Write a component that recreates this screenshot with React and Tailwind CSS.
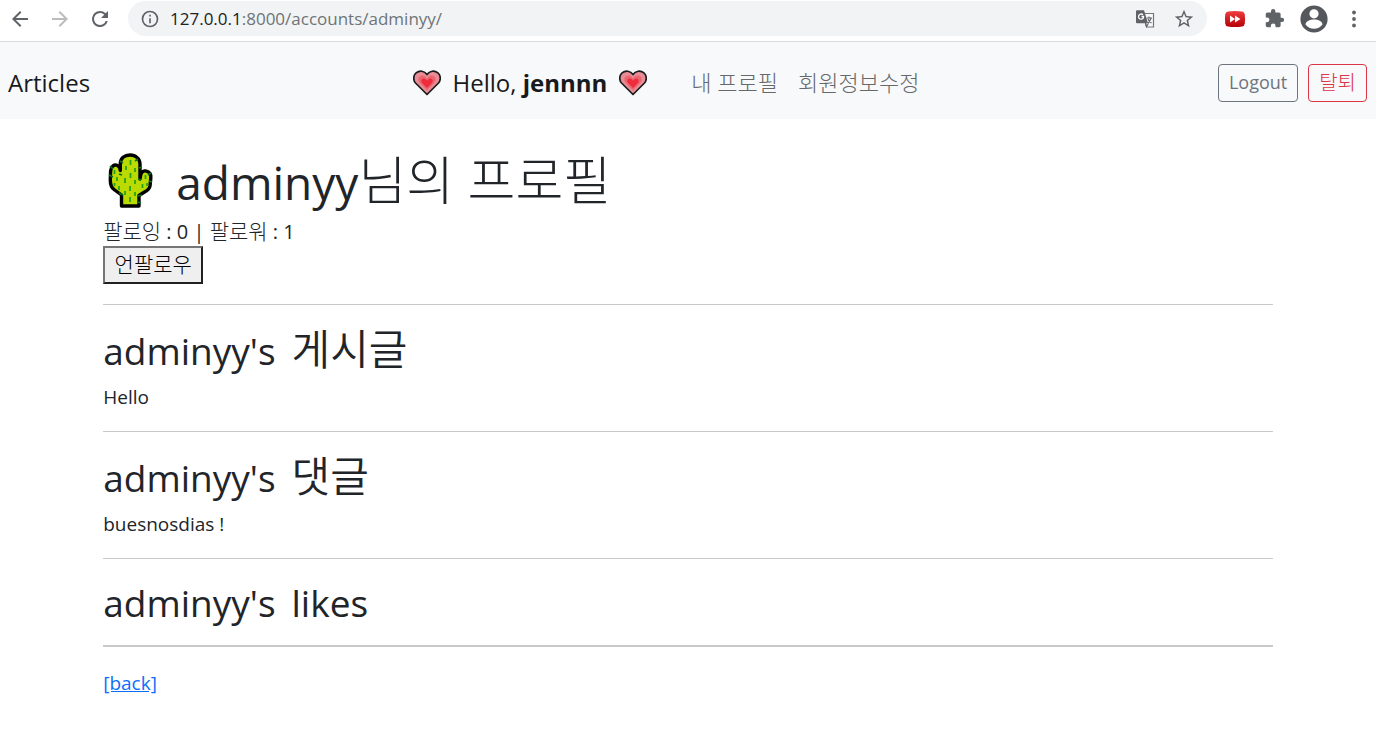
import React from 'react';

function Heart() {
  return (
    <svg viewBox="0 0 28 26" className="h-[26px] w-[28px] shrink-0" aria-hidden="true">
      <path d="M14 24.500 L2.500 13 C-.1 9.800 .2 5.300 3.100 2.900 C6.500 .1 11.500 .7 14 4.500 C16.500 .7 21.500 .1 24.900 2.900 C27.800 5.300 28.100 9.800 25.500 13 Z" fill="#ea8c95" stroke="#1c1c1e" strokeWidth="1.700" strokeLinejoin="round" />
      <path d="M14 20.500 L6.800 13 C4.300 10.200 5.300 6.500 8 5.800 C10.800 5 13 6.500 14 8.800 C15 6.500 17.200 5 20 5.800 C22.700 6.500 23.700 10.200 21.200 13 Z" fill="#ea6670" />
      <path d="M14 18 L9.300 13.200 C7.300 10.800 8.500 8.700 10.500 8.500 C12.200 8.400 13.300 9.500 14 10.800 C14.700 9.500 15.800 8.400 17.500 8.500 C19.500 8.700 20.700 10.800 18.700 13.200 Z" fill="#ee2c3c" />
    </svg>
  );
}

function Cactus() {
  return (
    <svg viewBox="0 0 46 56" className="h-[56px] w-[46px] shrink-0" aria-hidden="true">
      <path d="M13.500 53 V42 L6 36.500 C3 34.300 2.300 31 2.300 27 L2.600 18 C3 12.800 6.500 11.200 9 12.300 C11 13.200 12.300 15 12.300 17.500 V11 C12.300 5 16.500 2 22 2 C28 2 32 6 32 11 V26 L32.800 21.500 C33.500 18.500 36 17.300 38.500 18.200 C41.500 19 43.200 21.500 42.800 25 L42 33 C41.500 36 39 37.700 36.500 39 L31 42.500 V53 Z" fill="#bada00" stroke="#000" strokeWidth="3.400" strokeLinejoin="round" />
      <path d="M22.500 7v5M18 13v4M27 15v4M22.500 20v5M17 25v5M27 27v4M22 33v5M17 38v4M27 39v4M22 44v5M6.500 17v4M9 24v4M6.500 30v3M11 33v4M37.500 22v4M39 30v3M34.500 31v4" stroke="#1ea21e" strokeWidth="1.700" />
      <path d="M12 8l3 2M30 6l-3 2M34 14l-3 1M11 21l3 1M33 27l-3-1M1 22l4 2M11 40l4 2M34 42l-4 1M30 49l3 1M44 29l-3-1M2 13l3 3M43 20l-3 2" stroke="#0d6f20" strokeWidth="1.600" />
    </svg>
  );
}

const glyph = 'h-6 w-6';

function BrowserBar() {
  return (
    <header className="flex h-[42px] items-start border-b border-[#d9dbde] bg-white text-[#5f6368]">
      <div className="flex h-[37px] flex-1 items-center pl-2">
        <button aria-label="Back" className="flex w-10 justify-start">
          <svg viewBox="0 0 24 24" className={glyph} fill="currentColor"><path d="M20 11H7.830l5.590-5.590L12 4l-8 8 8 8 1.410-1.410L7.830 13H20z" /></svg>
        </button>
        <button aria-label="Forward" className="flex w-10 justify-start text-[#babcbe]">
          <svg viewBox="0 0 24 24" className={glyph} fill="currentColor"><path d="M12 4l-1.410 1.410L16.170 11H4v2h12.170l-5.580 5.590L12 20l8-8z" /></svg>
        </button>
        <button aria-label="Reload" className="flex w-10 justify-start">
          <svg viewBox="0 0 24 24" className={glyph} fill="currentColor"><path d="M17.650 6.350A7.960 7.960 0 0 0 12 4a8 8 0 1 0 7.730 10h-2.080A6 6 0 1 1 12 6c1.660 0 3.140.69 4.220 1.780L13 11h7V4z" /></svg>
        </button>
        <div className="flex h-[35px] flex-1 items-center rounded-full bg-[#f1f3f4] pl-3 pr-3">
          <svg viewBox="0 0 24 24" className="mr-[10px] h-5 w-5" fill="currentColor" aria-hidden="true"><path d="M11 7h2v2h-2zm0 4h2v6h-2zm1-9a10 10 0 1 0 0 20 10 10 0 0 0 0-20m0 18a8 8 0 1 1 0-16 8 8 0 0 1 0 16" /></svg>
          <div className="flex-1 text-[17px] leading-6 text-[#6f7377]"><span className="text-[#202124]">127.0.0.1</span>:8000/accounts/adminyy/</div>
          <button aria-label="Translate" className="mr-[18px]">
            <svg viewBox="0 0 20 20" className="h-5 w-5">
              <path d="M8 4.500h10.500v13.500H11.500z" fill="#f8f9fa" stroke="#74787c" strokeWidth="1.200" />
              <path d="M2 1.200h7l4 13H2a1 1 0 0 1-1-1v-11a1 1 0 0 1 1-1z" fill="#5f6368" />
              <path d="M9 7.500H6.500M8.700 7.500C8.500 9.300 7.400 10.200 6.100 10.200a2.600 2.600 0 1 1 1.800-4.500" fill="none" stroke="#fff" strokeWidth="1.300" />
              <path d="M11.500 9h5.500M14 7.500V9M16 9c-.5 2-1.500 3.500-3 5M13 10c.5 1.500 2 3.200 3.500 4M10.500 14.200l1 3.500 2-3.500" fill="none" stroke="#5f6368" strokeWidth="1.100" />
            </svg>
          </button>
          <button aria-label="Bookmark">
            <svg viewBox="0 0 24 24" className="h-[22px] w-[22px]" fill="currentColor"><path d="M22 9.240l-7.190-.62L12 2 9.190 8.630 2 9.240l5.460 4.730L5.820 21 12 17.270 18.180 21l-1.630-7.030zM12 15.400l-3.760 2.270 1-4.280-3.320-2.880 4.380-.38L12 6.100l1.710 4.040 4.380.38-3.320 2.880 1 4.280z" /></svg>
          </button>
        </div>
      </div>
      <div className="flex h-[37px] items-center pl-[17px] pr-[10px]">
        <button aria-label="Fast forward" className="mr-[18px]">
          <svg viewBox="0 0 22 18" className="h-[18px] w-[22px]">
            <defs><linearGradient id="red" x1="0" y1="0" x2="0" y2="1"><stop offset="0" stopColor="#ef3d40" /><stop offset="1" stopColor="#b50005" /></linearGradient></defs>
            <path d="M4 1.500Q11 .5 18 1.500Q20.500 2 20.800 4.500Q21.300 9 20.800 13.500Q20.500 16 18 16.500Q11 17.500 4 16.500Q1.500 16 1.200 13.500Q.7 9 1.200 4.500Q1.500 2 4 1.500" fill="url(#red)" />
            <path d="M6 5.500L11 9L6 12.500zM11 5.500L16.500 9L11 12.500z" fill="#fff" />
          </svg>
        </button>
        <button aria-label="Extensions" className="mr-[15px]">
          <svg viewBox="0 0 24 24" className="h-[21px] w-[21px]" fill="currentColor"><path d="M20.500 11H19V7a2 2 0 0 0-2-2h-4V3.500a2.500 2.500 0 0 0-5 0V5H4a2 2 0 0 0-2 2v3.800h1.500a2.700 2.700 0 0 1 0 5.400H2V20a2 2 0 0 0 2 2h3.800v-1.500a2.700 2.700 0 0 1 5.400 0V22H17a2 2 0 0 0 2-2v-4h1.500a2.500 2.500 0 0 0 0-5" /></svg>
        </button>
        <button aria-label="Account" className="mr-[14px]">
          <svg viewBox="0 0 28 28" className="h-7 w-7">
            <circle cx="14" cy="14" r="13.600" fill="#54585d" />
            <circle cx="14" cy="8.800" r="4.600" fill="#fff" />
            <path d="M5.500 19.500C6 12.800 22 12.800 22.500 19.500C18.500 25.200 9.500 25.200 5.500 19.500" fill="#fff" />
          </svg>
        </button>
        <button aria-label="Menu">
          <svg viewBox="0 0 24 24" className={glyph} fill="currentColor"><circle cx="12" cy="5.500" r="1.900" /><circle cx="12" cy="12" r="1.900" /><circle cx="12" cy="18.500" r="1.900" /></svg>
        </button>
      </div>
    </header>
  );
}

function Section({ owner, topic, children }) {
  return (
    <section className="border-t border-[#c8c9ca] pt-5">
      <h2 className="flex h-[50px] items-baseline gap-4 text-[37px] leading-[48px]">
        <span>{owner}'s</span> {topic}
      </h2>
      {children && <p className="mt-2 mb-5 text-[19px] leading-7">{children}</p>}
    </section>
  );
}

export default function App() {
  return (
    <div className="min-h-screen bg-white font-['Open_Sans','Noto_Sans_CJK_KR',sans-serif] text-[#212529]">
      <BrowserBar />
      <nav className="flex h-[77px] items-center justify-between bg-[#f8f9fa] pt-1 pl-2 pr-[9px]">
        <a href="#articles" className="text-[24px] text-[#181a1b]">Articles</a>
        <div className="ml-6 flex items-center">
          <Heart />
          <span className="mx-3 text-[24px] text-[#181a1b]">Hello, <b className="font-bold">jennnn</b></span>
          <Heart />
          <a href="#profile" className="ml-11 text-[22px] font-light text-[#66686a]">내 프로필</a>
          <a href="#edit" className="ml-5 text-[22px] font-light text-[#66686a]">회원정보수정</a>
        </div>
        <div className="flex gap-[10px]">
          <button className="h-[38px] rounded border border-[#6c757d] px-[10px] text-[18px] text-[#6c757d]">Logout</button>
          <button className="h-[38px] rounded border border-[#dc3545] px-[10px] text-[20px] font-light text-[#dc3545]">탈퇴</button>
        </div>
      </nav>
      <main className="mx-auto w-[85%] pt-[30px]">
        <h1 className="flex h-[64px] items-center gap-[22px] pl-[5px] text-[46px] leading-[60px]">
          <Cactus />
          <span>adminyy<span className="text-[52px] font-light">님의 프로필</span></span>
        </h1>
        <p className="mt-1 text-[20px] leading-[29px]">
          <span className="text-[21px] font-light">팔로잉</span> : 0 | <span className="text-[21px] font-light">팔로워</span> : 1
        </p>
        <button className="mb-5 block h-[38px] w-[100px] border-2 border-t-[#767676] border-r-[#212121] border-b-[#212121] border-l-[#767676] bg-[#efefef] text-[21px] font-light text-black">언팔로우</button>
        <Section owner="adminyy" topic={<span className="text-[42px] font-[350]">게시글</span>}>Hello</Section>
        <Section owner="adminyy" topic={<span className="text-[42px] font-[350]">댓글</span>}>buesnosdias !</Section>
        <Section owner="adminyy" topic={<span>likes</span>} />
        <hr className="mt-4 mb-5 border-t-2 border-[#c8c9ca]" />
        <a href="#back" className="text-[19px] leading-8 text-[#0d6efd] underline">[back]</a>
      </main>
    </div>
  );
}
